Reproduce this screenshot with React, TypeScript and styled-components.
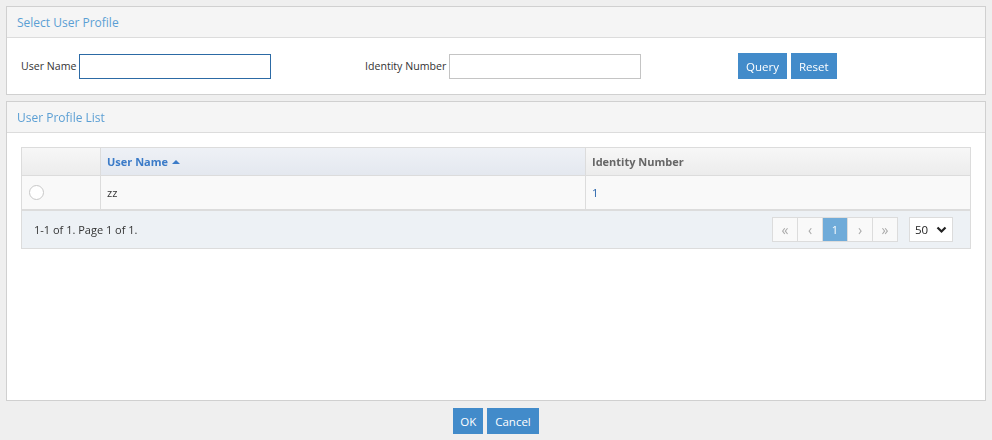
import React from "react";
import styled, { createGlobalStyle } from "styled-components";

const GlobalStyle = createGlobalStyle`
    html, body {
        margin: 0;
        padding: 0;
        background: #efefef;
        font-family: "Open Sans", "Noto Sans", sans-serif;
        font-size: 11px;
        color: #333;
    }
`;

const users = [{ name: "zz", identity: "1" }];

const App = () => {
    return (
        <Page>
            <GlobalStyle />
            <Panel>
                <PanelHeader>Select User Profile</PanelHeader>
                <QueryRow>
                    <Field>
                        <Label>User Name</Label>
                        <TextInput $focused autoFocus />
                    </Field>
                    <Field>
                        <Label>Identity Number</Label>
                        <TextInput />
                    </Field>
                    <Buttons>
                        <Button $pad="0 8px">Query</Button>
                        <Button $pad="0 8px">Reset</Button>
                    </Buttons>
                </QueryRow>
            </Panel>

            <Panel $grow>
                <PanelHeader>User Profile List</PanelHeader>
                <ListBody>
                    <Grid>
                        <HeadRow>
                            <HeadCell />
                            <HeadCell $sorted>
                                User Name <SortArrow />
                            </HeadCell>
                            <HeadCell>Identity Number</HeadCell>
                        </HeadRow>
                        {users.map((u) => (
                            <DataRow key={u.name}>
                                <Cell>
                                    <Radio />
                                </Cell>
                                <Cell>{u.name}</Cell>
                                <Cell $link>{u.identity}</Cell>
                            </DataRow>
                        ))}
                        <Footer>
                            <span>1-1 of 1. Page 1 of 1.</span>
                            <FooterRight>
                                <Pager>
                                    <PageBtn>«</PageBtn>
                                    <PageBtn>‹</PageBtn>
                                    <PageBtn $active>1</PageBtn>
                                    <PageBtn>›</PageBtn>
                                    <PageBtn>»</PageBtn>
                                </Pager>
                                <SizeSelect>
                                    50
                                    <svg width="11" height="8" viewBox="0 0 11 8">
                                        <path d="M1.5 1.5 L5.5 5.5 L9.5 1.5" stroke="#222" strokeWidth="2.2" fill="none" />
                                    </svg>
                                </SizeSelect>
                            </FooterRight>
                        </Footer>
                    </Grid>
                </ListBody>
            </Panel>

            <BottomBar>
                <Button $pad="0 7px">OK</Button>
                <Button $pad="0 8px">Cancel</Button>
            </BottomBar>
        </Page>
    );
};

const Page = styled.div`
    height: 440px;
    box-sizing: border-box;
    padding: 6px 6px 0;
    display: flex;
    flex-direction: column;
    gap: 6px;
`;

const Panel = styled.div<{ $grow?: boolean }>`
    background: #fff;
    border: 1px solid #d0d0d0;
    display: flex;
    flex-direction: column;
    ${(p) => (p.$grow ? "height: 300px; box-sizing: border-box;" : "")}
`;

const PanelHeader = styled.div`
    height: 30px;
    background: #f5f5f5;
    border-bottom: 1px solid #dcdcdc;
    display: flex;
    align-items: center;
    padding-left: 10px;
    color: #5b9fd4;
    font-size: 12px;
`;

const QueryRow = styled.div`
    height: 56px;
    display: grid;
    grid-template-columns: 344px 373px auto;
    align-items: center;
    padding-left: 14px;
`;

const Field = styled.div`
    display: flex;
    align-items: center;
    gap: 3px;
`;

const Label = styled.span`
    color: #333;
    font-size: 10.6px;
`;

const TextInput = styled.input<{ $focused?: boolean }>`
    width: 192px;
    height: 25px;
    box-sizing: border-box;
    border: 1px solid ${(p) => (p.$focused ? "#2c6aa5" : "#c4c4c4")};
    outline: none;
    padding: 0 4px;
    font: inherit;
`;

const Buttons = styled.div`
    display: flex;
    gap: 4px;
`;

const Button = styled.button<{ $pad?: string }>`
    height: 26px;
    padding: ${(p) => p.$pad || "0 9px"};
    background: #428bca;
    border: none;
    color: #fff;
    font-family: inherit;
    font-size: 11.5px;
    font-weight: 400;
    cursor: pointer;
`;

const ListBody = styled.div`
    padding: 14px 14px 0;
`;

const Grid = styled.div`
    border: 1px solid #dcdcdc;
    display: flex;
    flex-direction: column;
`;

const HeadRow = styled.div`
    display: grid;
    grid-template-columns: 78px 485px 1fr;
    height: 27px;
    border-bottom: 1px solid #dcdcdc;
`;

const HeadCell = styled.div<{ $sorted?: boolean }>`
    display: flex;
    align-items: center;
    gap: 4px;
    padding-left: 6px;
    font-weight: 700;
    color: ${(p) => (p.$sorted ? "#3b7bc8" : "#666")};
    background: ${(p) =>
        p.$sorted ? "linear-gradient(#eef1f6, #e4e8ef)" : "linear-gradient(#f7f7f7, #ececec)"};
    & + & {
        border-left: 1px solid #dcdcdc;
    }
`;

const SortArrow = styled.span`
    width: 0;
    height: 0;
    border-left: 4px solid transparent;
    border-right: 4px solid transparent;
    border-bottom: 4px solid #3b7bc8;
`;

const DataRow = styled.div`
    display: grid;
    grid-template-columns: 78px 485px 1fr;
    height: 33px;
    background: #f9f9f9;
    border-bottom: 2px solid #dcdcdc;
`;

const Cell = styled.div<{ $link?: boolean }>`
    display: flex;
    align-items: center;
    padding-left: 6px;
    color: ${(p) => (p.$link ? "#1f5ea8" : "#333")};
    & + & {
        border-left: 1px solid #dcdcdc;
    }
`;

const Radio = styled.span`
    width: 13px;
    height: 13px;
    border: 1px solid #c8c8c8;
    border-radius: 50%;
    background: #fff;
    margin-left: 1px;
`;

const Footer = styled.div`
    height: 37px;
    background: #edf1f5;
    display: flex;
    align-items: center;
    justify-content: space-between;
    padding: 0 17px 0 12px;
`;

const FooterRight = styled.div`
    display: flex;
    align-items: center;
    gap: 11px;
`;

const Pager = styled.div`
    display: flex;
    border: 1px solid #dcdcdc;
`;

const PageBtn = styled.span<{ $active?: boolean }>`
    width: 24px;
    height: 23px;
    display: flex;
    align-items: center;
    justify-content: center;
    background: ${(p) => (p.$active ? "#6fabd9" : "#f9f9f9")};
    color: ${(p) => (p.$active ? "#fff" : "#aaa")};
    font-size: ${(p) => (p.$active ? "11px" : "14px")};
    & + & {
        border-left: 1px solid #dcdcdc;
    }
`;

const SizeSelect = styled.div`
    width: 44px;
    height: 25px;
    box-sizing: border-box;
    border: 1px solid #dcdcdc;
    background: #fff;
    display: flex;
    align-items: center;
    justify-content: space-between;
    padding: 0 5px 0 5px;
    color: #222;
    font-size: 11.5px;
`;

const BottomBar = styled.div`
    display: flex;
    justify-content: center;
    gap: 4px;
    padding-top: 1px;
`;

export default App;
